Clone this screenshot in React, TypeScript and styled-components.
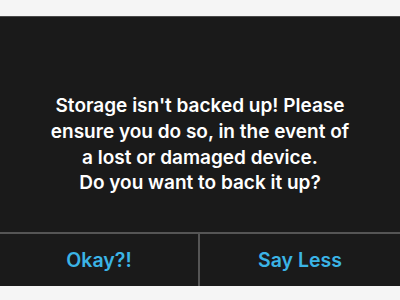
import React from "react";
import styled, { createGlobalStyle } from "styled-components";

const Global = createGlobalStyle`
  html, body { margin: 0; padding: 0; background: #f5f5f5; }
  body { font-family: Inter, "Noto Sans", sans-serif; }
`;

const Page = styled.div`
  width: 400px;
  height: 300px;
  padding-top: 16px;
  box-sizing: border-box;
  background: #f5f5f5;
`;

const Dialog = styled.div`
  background: #1a1a1a;
  border-top: 1px solid #4a4a4a;
  display: flex;
  flex-direction: column;
  height: 270px;
  box-sizing: border-box;
`;

const Message = styled.div`
  flex: 1;
  display: flex;
  align-items: center;
  justify-content: center;
  padding: 40px 30px 0;
  color: #ffffff;
  font-size: 19px;
  font-weight: 600;
  line-height: 25.7px;
  text-align: center;
`;

const Actions = styled.div`
  display: grid;
  grid-template-columns: 200px 1fr;
  border-top: 2px solid #555555;
  height: 54px;
  box-sizing: border-box;
`;

const Action = styled.button<{ $divider?: boolean }>`
  background: transparent;
  border: none;
  border-right: ${(p) => (p.$divider ? "2px solid #555555" : "none")};
  color: #3bb4e6;
  font-family: Inter, "Noto Sans", sans-serif;
  font-size: 19.5px;
  font-weight: 600;
  padding: 0;
  cursor: pointer;
`;

export default function App() {
  return (
    <>
      <Global />
      <Page>
        <Dialog>
          <Message>
            Storage isn't backed up! Please
            <br />
            ensure you do so, in the event of
            <br />
            a lost or damaged device.
            <br />
            Do you want to back it up?
          </Message>
          <Actions>
            <Action $divider>Okay?!</Action>
            <Action>Say Less</Action>
          </Actions>
        </Dialog>
      </Page>
    </>
  );
}
